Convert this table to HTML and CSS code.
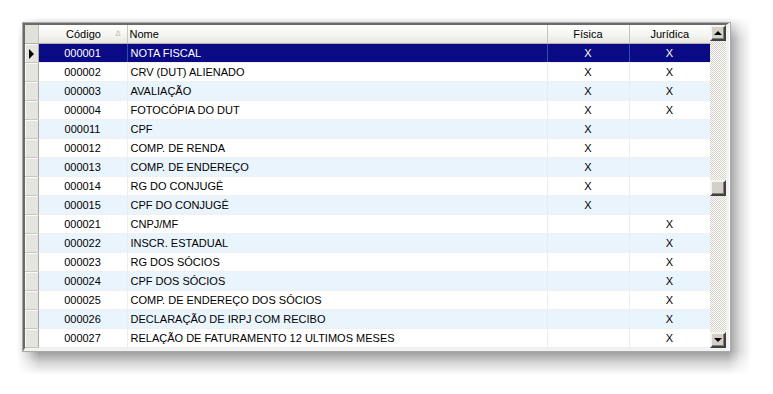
FILE: index.html
```html
<!DOCTYPE html>
<html>
<head>
<meta charset="utf-8">
<link rel="stylesheet" href="styles.css">
</head>
<body>
<div class="frame">
<div class="window">
  <div class="grid">
    <table class="tbl">
      <colgroup>
        <col class="c-ind"><col class="c-cod"><col class="c-nome"><col class="c-fis"><col class="c-jur">
      </colgroup>
      <thead>
        <tr>
          <th class="ind"></th>
          <th class="cod"><span>Código</span><span class="sort">&#x2206;</span></th>
          <th class="nome">Nome</th>
          <th class="ctr">Física</th>
          <th class="ctr last">Jurídica</th>
        </tr>
      </thead>
      <tbody>
        <tr class="sel"><td class="ind"><span class="ptr"></span></td><td class="ctr">000001</td><td class="nome">NOTA FISCAL</td><td class="ctr">X</td><td class="ctr">X</td></tr>
        <tr><td class="ind"></td><td class="ctr">000002</td><td class="nome">CRV (DUT) ALIENADO</td><td class="ctr">X</td><td class="ctr">X</td></tr>
        <tr class="alt"><td class="ind"></td><td class="ctr">000003</td><td class="nome">AVALIAÇÃO</td><td class="ctr">X</td><td class="ctr">X</td></tr>
        <tr><td class="ind"></td><td class="ctr">000004</td><td class="nome">FOTOCÓPIA DO DUT</td><td class="ctr">X</td><td class="ctr">X</td></tr>
        <tr class="alt"><td class="ind"></td><td class="ctr">000011</td><td class="nome">CPF</td><td class="ctr">X</td><td class="ctr"></td></tr>
        <tr><td class="ind"></td><td class="ctr">000012</td><td class="nome">COMP. DE RENDA</td><td class="ctr">X</td><td class="ctr"></td></tr>
        <tr class="alt"><td class="ind"></td><td class="ctr">000013</td><td class="nome">COMP. DE ENDEREÇO</td><td class="ctr">X</td><td class="ctr"></td></tr>
        <tr><td class="ind"></td><td class="ctr">000014</td><td class="nome">RG DO CONJUGÊ</td><td class="ctr">X</td><td class="ctr"></td></tr>
        <tr class="alt"><td class="ind"></td><td class="ctr">000015</td><td class="nome">CPF DO CONJUGÊ</td><td class="ctr">X</td><td class="ctr"></td></tr>
        <tr><td class="ind"></td><td class="ctr">000021</td><td class="nome">CNPJ/MF</td><td class="ctr"></td><td class="ctr">X</td></tr>
        <tr class="alt"><td class="ind"></td><td class="ctr">000022</td><td class="nome">INSCR. ESTADUAL</td><td class="ctr"></td><td class="ctr">X</td></tr>
        <tr><td class="ind"></td><td class="ctr">000023</td><td class="nome">RG DOS SÓCIOS</td><td class="ctr"></td><td class="ctr">X</td></tr>
        <tr class="alt"><td class="ind"></td><td class="ctr">000024</td><td class="nome">CPF DOS SÓCIOS</td><td class="ctr"></td><td class="ctr">X</td></tr>
        <tr><td class="ind"></td><td class="ctr">000025</td><td class="nome">COMP. DE ENDEREÇO DOS SÓCIOS</td><td class="ctr"></td><td class="ctr">X</td></tr>
        <tr class="alt"><td class="ind"></td><td class="ctr">000026</td><td class="nome">DECLARAÇÃO DE IRPJ COM RECIBO</td><td class="ctr"></td><td class="ctr">X</td></tr>
        <tr><td class="ind"></td><td class="ctr">000027</td><td class="nome">RELAÇÃO DE FATURAMENTO 12 ULTIMOS MESES</td><td class="ctr"></td><td class="ctr">X</td></tr>
      </tbody>
    </table>
  </div>
  <div class="vscroll">
    <div class="sbtn"><span class="tri up"></span></div>
    <div class="track">
      <div class="track-a"></div>
      <div class="thumb"></div>
      <div class="track-b"></div>
    </div>
    <div class="sbtn"><span class="tri down"></span></div>
  </div>
</div>
</div>
</body>
</html>
```

FILE: styles.css
```css
html {
  margin: 0;
  padding: 0;
  background: #ffffff;
}
body {
  margin: 0;
  box-sizing: border-box;
  min-height: 394px;
  padding: 22px 0 0 22px;
  font-family: "Liberation Sans", Arial, sans-serif;
  font-size: 11px;
}
.frame {
  position: relative;
  width: 707px;
  height: 328px;
  border: 1px solid #a8a8a8;
  background: #ffffff;
}
.frame::before {
  content: "";
  position: absolute;
  z-index: -1;
  left: -6px;
  top: -6px;
  right: -22px;
  bottom: -24px;
  background: linear-gradient(to right, rgba(0,0,0,0) 0, rgba(0,0,0,0.16) 10px, rgba(0,0,0,0.4) 22px, rgba(0,0,0,0.4) calc(100% - 24px), rgba(0,0,0,0.14) calc(100% - 12px), rgba(0,0,0,0) 100%);
  -webkit-mask-image: linear-gradient(to bottom, transparent 0, rgba(0,0,0,0.5) 10px, #000 22px, #000 calc(100% - 24px), rgba(0,0,0,0.4) calc(100% - 12px), transparent 100%);
  mask-image: linear-gradient(to bottom, transparent 0, rgba(0,0,0,0.5) 10px, #000 22px, #000 calc(100% - 24px), rgba(0,0,0,0.4) calc(100% - 12px), transparent 100%);
}
.window {
  display: flex;
  width: 701px;
  height: 323px;
  border-style: solid;
  border-width: 2px 3px 3px 2px;
  border-color: #6a6a6a #f2f2f2 #f2f2f2 #6a6a6a;
  background: #ffffff;
}
.grid {
  width: 685px;
  overflow: hidden;
}
.tbl {
  border-collapse: collapse;
  table-layout: fixed;
  width: 685px;
}
.c-ind { width: 13px; }
.c-cod { width: 89px; }
.c-nome { width: 420px; }
.c-fis { width: 82px; }
.c-jur { width: 81px; }
th {
  height: 18px;
  padding: 0;
  font-weight: normal;
  color: #000;
  font-size: 11px;
  background: linear-gradient(#ffffff, #f3f3f0 60%, #e6e5df);
  border-right: 1px solid #c5c5c0;
  border-bottom: 1px solid #b0b0aa;
  text-align: center;
  white-space: nowrap;
}
th.nome { text-align: left; padding-left: 2px; }
th.last { border-right: none; }
th.ind {
  background: #e2e0da;
  border-right: 1px solid #c0c0c0;
}
th.cod { position: relative; }
th.cod span:first-child { margin-left: 2px; }
.sort {
  position: absolute;
  right: 6px;
  top: 4px;
  color: #b8b8b0;
  font-size: 8px;
}
td {
  height: 18px;
  padding: 0;
  border-right: 1px solid #ececec;
  border-bottom: 1px solid #f0f0f0;
  white-space: nowrap;
  overflow: hidden;
  font-size: 11px;
  color: #000;
}
td.ctr { text-align: center; }
td.nome { padding-left: 3px; }
tr.alt td { background: #eaf4fd; }
td.ind, tr.alt td.ind {
  background: #e6e4de;
  border-right: 1px solid #a8a8a2;
  border-bottom: 1px solid #c8c6c0;
  box-shadow: inset 1px 1px 0 #fafafa;
  position: relative;
}
tr.sel td { background: #0a0a84; color: #fff; border-right-color: #3050a8; }
tr.sel td.ind { background: #e6e4de; border-right-color: #a8a8a2; }
.ptr {
  position: absolute;
  left: 4px;
  top: 5px;
  width: 0;
  height: 0;
  border-top: 5px solid transparent;
  border-bottom: 5px solid transparent;
  border-left: 5px solid #000;
}
.vscroll {
  width: 16px;
  display: flex;
  flex-direction: column;
}
.sbtn {
  height: 12px;
  flex: none;
  background: #d4d0c8;
  border-style: solid;
  border-width: 2px;
  border-color: #f4f4f0 #404040 #404040 #f4f4f0;
  box-shadow: inset -1px -1px 0 #808080;
  display: flex;
  align-items: center;
  justify-content: center;
}
.tri { width: 0; height: 0; border-left: 4px solid transparent; border-right: 4px solid transparent; }
.tri.up { border-bottom: 4px solid #000; }
.tri.down { border-top: 4px solid #000; }
.track {
  flex: 1;
  display: flex;
  flex-direction: column;
  background: repeating-conic-gradient(#d4d0c8 0 25%, #ffffff 0 50%) 0 0 / 2px 2px;
}
.track-a { height: 139px; }
.thumb {
  height: 12px;
  flex: none;
  background: #d4d0c8;
  border-style: solid;
  border-width: 2px;
  border-color: #f4f4f0 #404040 #404040 #f4f4f0;
  box-shadow: inset -1px -1px 0 #808080;
}
.track-b { flex: 1; }
```
